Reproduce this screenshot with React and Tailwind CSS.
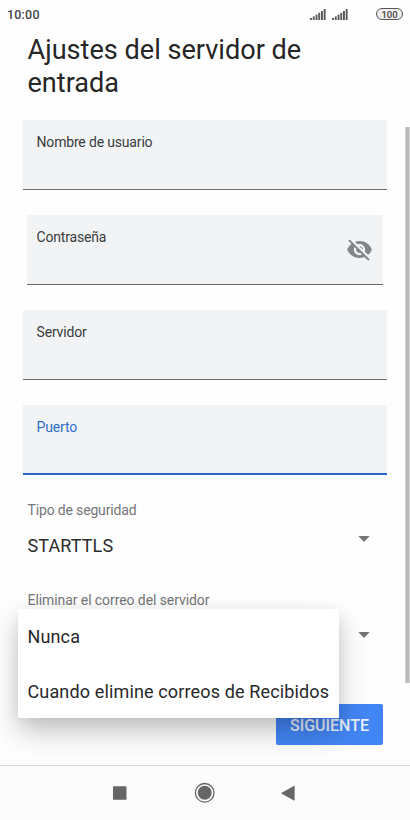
import { useState } from "react";

const fields = [
  { name: "username", label: "Nombre de usuario" },
  { name: "password", label: "Contraseña", secret: true },
  { name: "server", label: "Servidor" },
  { name: "port", label: "Puerto" },
];

const options = ["Nunca", "Cuando elimine correos de Recibidos"];

function Signal() {
  return (
    <svg width="16" height="11" viewBox="0 0 16 11" fill="#5a5a5a">
      <rect x="0" y="9" width="1.9" height="2" />
      <rect x="2.8" y="7.4" width="1.9" height="3.6" />
      <rect x="5.6" y="5.6" width="1.9" height="5.4" />
      <rect x="8.3" y="3.8" width="1.9" height="7.2" />
      <rect x="11" y="2" width="1.9" height="9" />
      <rect x="13.7" y="0" width="1.9" height="11" />
    </svg>
  );
}

function StatusBar() {
  return (
    <div className="flex h-[30px] items-center pl-[7px] pr-[7px] text-[#444]">
      <span className="flex-1 text-[12.5px] leading-[30px] font-medium tracking-[0.2px]">10:00</span>
      <div className="mr-[28px] mt-[-1px] flex gap-[6px]">
        <Signal />
        <Signal />
      </div>
      <span className="mt-[-2px] flex h-[12px] w-[27px] items-center justify-center rounded-full border border-[#555] bg-[#eee] pt-px text-[9.5px] leading-[10px] font-medium">
        100
      </span>
    </div>
  );
}

function EyeOff() {
  return (
    <svg width="27" height="27" viewBox="0 0 24 24" fill="#80868b">
      <path d="M12 7c2.76 0 5 2.24 5 5 0 .65-.13 1.26-.36 1.83l2.92 2.92c1.51-1.26 2.7-2.89 3.43-4.75-1.73-4.39-6-7.5-11-7.5-1.4 0-2.74.25-3.98.7l2.16 2.16C10.74 7.13 11.35 7 12 7zM2 4.27l2.28 2.28.46.46C3.08 8.3 1.78 10.02 1 12c1.73 4.39 6 7.5 11 7.5 1.55 0 3.03-.3 4.38-.84l.42.42L19.73 22 21 20.73 3.27 3 2 4.27zM7.53 9.8l1.55 1.55c-.05.21-.08.43-.08.65 0 1.66 1.34 3 3 3 .22 0 .44-.03.65-.08l1.55 1.55c-.67.33-1.41.53-2.2.53-2.76 0-5-2.24-5-5 0-.79.2-1.53.53-2.2zm4.31-.78l3.15 3.15.02-.16c0-1.66-1.34-3-3-3l-.17.01z" />
    </svg>
  );
}

function Arrow() {
  return (
    <svg width="12" height="6" viewBox="0 0 12 6" fill="#757575">
      <path d="M0.3 0h11.4L6 6z" />
    </svg>
  );
}

function Field({ field, focused, onFocus }) {
  return (
    <div
      onClick={onFocus}
      className={
        "flex h-[70px] justify-between bg-[#f1f3f4] pt-[13px] pr-[10px] " +
        (field.secret ? "mx-1 pl-[9.5px] " : "pl-[13.5px] ") +
        (focused ? "border-b-2 border-[#2a67c9] text-[#2f6fca]" : "border-b border-[#6a6b6d] text-[#3a3b3d]")
      }
    >
      <span className="text-[14px] leading-[18px] tracking-[-0.17px]">{field.label}</span>
      {field.secret && (
        <button className="mt-[8px] h-[27px]">
          <EyeOff />
        </button>
      )}
    </div>
  );
}

export default function App() {
  const [focus, setFocus] = useState("port");
  const [open, setOpen] = useState(true);

  return (
    <div className="flex h-[820px] w-[410px] flex-col overflow-hidden bg-[#fefefe] font-[Roboto,sans-serif]">
      <StatusBar />
      <main className="flex flex-1">
        <div className="flex-1 pl-[23px]">
          <h1 className="mt-[3.5px] pl-[4.5px] text-[27.1px] leading-[33px] text-[#262626]">
            Ajustes del servidor de
            <br />
            entrada
          </h1>
          <div className="mt-[20.5px] flex w-[364px] flex-col gap-[25px]">
            {fields.map((f) => (
              <Field key={f.name} field={f} focused={focus === f.name} onFocus={() => setFocus(f.name)} />
            ))}
          </div>

          <div className="w-[360px] pl-[4.5px]">
            <p className="mt-[26px] text-[14px] leading-[18px] tracking-[-0.16px] text-[#757679]">Tipo de seguridad</p>
            <div className="mt-[15px] flex h-6 justify-between pr-[13px]">
              <span className="text-[18px] leading-6 tracking-[0.1px] text-[#2c2c2c]">STARTTLS</span>
              <div className="pt-[2px]">
                <Arrow />
              </div>
            </div>
            <p className="mt-[33px] text-[14px] leading-[18px] tracking-[-0.08px] text-[#757679]">
              Eliminar el correo del servidor
            </p>
            <div className="relative mt-[16px] flex h-6 justify-end pr-[13px]" onClick={() => setOpen(true)}>
              <div className="pt-[7px]">
                <Arrow />
              </div>
              {open && (
                <ul className="absolute top-[-16px] left-[-9.5px] z-10 h-[109px] w-[321px] rounded-[1px] bg-white pl-[9.5px] text-[18px] tracking-[0.14px] text-[#27282a] shadow-[0_14px_28px_rgba(0,0,0,0.22),0_3px_16px_rgba(0,0,0,0.07)]">
                  {options.map((o) => (
                    <li
                      key={o}
                      onClick={(e) => {
                        e.stopPropagation();
                        setOpen(false);
                      }}
                      className="h-[54.5px] leading-[55px] whitespace-nowrap"
                    >
                      {o}
                    </li>
                  ))}
                </ul>
              )}
            </div>
            <div className="mt-[55px] flex justify-end">
              <button className="h-[41px] w-[107px] rounded-[2px] bg-[#4285f4] pt-[2px] text-[16px] font-medium text-[#e9f0fd]">
                SIGUIENTE
              </button>
            </div>
          </div>
        </div>
        <div className="mt-[97px] h-[556px] w-[5px] border-x border-[#d4d4d4] bg-[#b8b8b8]"></div>
      </main>

      <nav className="relative z-20 flex h-[55px] items-center border-t border-[#d5d5d5] bg-[#fcfcfc]">
        <svg width="410" height="54" viewBox="0 0 410 54" fill="#666">
          <rect x="113" y="20.2" width="13.5" height="13.5" rx="0.7" />
          <circle cx="204.7" cy="26.8" r="9.3" fill="none" stroke="#666" strokeWidth="1.3" />
          <circle cx="204.7" cy="26.8" r="7" />
          <path d="M281.6 27.2L294.2 20.2V34.2z" stroke="#666" strokeWidth="0.8" strokeLinejoin="round" />
        </svg>
      </nav>
    </div>
  );
}
